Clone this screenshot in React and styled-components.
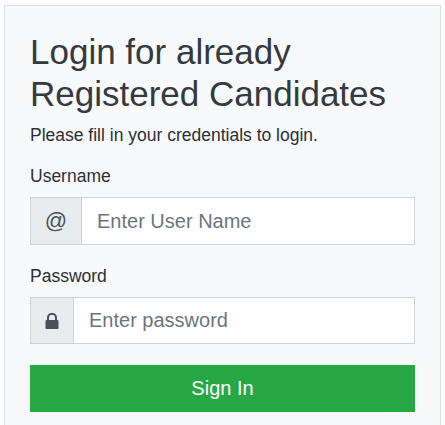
import React from 'react';
import styled, { createGlobalStyle } from 'styled-components';

const GlobalStyle = createGlobalStyle`
  html, body {
    margin: 0;
    padding: 0;
    background: #fff;
    overflow: hidden;
  }
  * {
    box-sizing: border-box;
  }
`;

const Page = styled.div`
  height: 425px;
  padding: 5px 4px 0;
  font-family: "Liberation Sans", Arial, sans-serif;
  color: #2b3035;
  overflow: hidden;
`;

const Card = styled.form`
  width: 437px;
  height: 440px;
  padding: 25px 25px 0;
  background: #f8f9fa;
  border: 1px solid #dfdfdf;
`;

const Title = styled.h2`
  margin: 0 0 8px;
  font-size: 35px;
  font-weight: 400;
  line-height: 42px;
  color: #343a40;
`;

const Hint = styled.p`
  margin: 0 0 17px;
  font-size: 17.5px;
  line-height: 24px;
`;

const Label = styled.label`
  display: block;
  margin-bottom: 9px;
  font-size: 17.5px;
  line-height: 24px;
`;

const Field = styled.div`
  margin-bottom: ${(p) => p.$gap}px;
`;

const InputGroup = styled.div`
  display: flex;
  height: ${(p) => p.$height}px;
`;

const Addon = styled.span`
  display: flex;
  align-items: center;
  justify-content: center;
  width: ${(p) => p.$width}px;
  flex: none;
  background: #e9ecef;
  border: 1px solid #ced4da;
  border-right: none;
  color: #495057;
  font-size: 22px;
`;

const Input = styled.input`
  flex: 1;
  min-width: 0;
  padding: 0 15px;
  font-family: inherit;
  font-size: 20px;
  color: #495057;
  background: #fff;
  border: 1px solid #ced4da;
  border-radius: 0;
  outline: none;

  &::placeholder {
    color: #6c757d;
    opacity: 1;
  }
`;

const SubmitButton = styled.button`
  display: block;
  width: 100%;
  height: 47px;
  padding: 0;
  font-family: inherit;
  font-size: 20px;
  color: #fff;
  background: #28a745;
  border: none;
  border-radius: 0;
`;

const LockIcon = () => (
  <svg width="14" height="16" viewBox="0 0 14 16" aria-hidden="true">
    <path d="M3 7V4.8a4 4 0 0 1 8 0V7" fill="none" stroke="currentColor" strokeWidth="2" />
    <rect x="0.5" y="7" width="13" height="9" rx="1" fill="currentColor" />
  </svg>
);

export default function App() {
  return (
    <Page>
      <GlobalStyle />
      <Card onSubmit={(e) => e.preventDefault()}>
        <Title>Login for already Registered Candidates</Title>
        <Hint>Please fill in your credentials to login.</Hint>
        <Field $gap={19}>
          <Label htmlFor="username">Username</Label>
          <InputGroup $height={48}>
            <Addon $width={51}>@</Addon>
            <Input id="username" type="text" placeholder="Enter User Name" />
          </InputGroup>
        </Field>
        <Field $gap={21}>
          <Label htmlFor="password">Password</Label>
          <InputGroup $height={47}>
            <Addon $width={43}>
              <LockIcon />
            </Addon>
            <Input id="password" type="password" placeholder="Enter password" />
          </InputGroup>
        </Field>
        <SubmitButton type="submit">Sign In</SubmitButton>
      </Card>
    </Page>
  );
}
